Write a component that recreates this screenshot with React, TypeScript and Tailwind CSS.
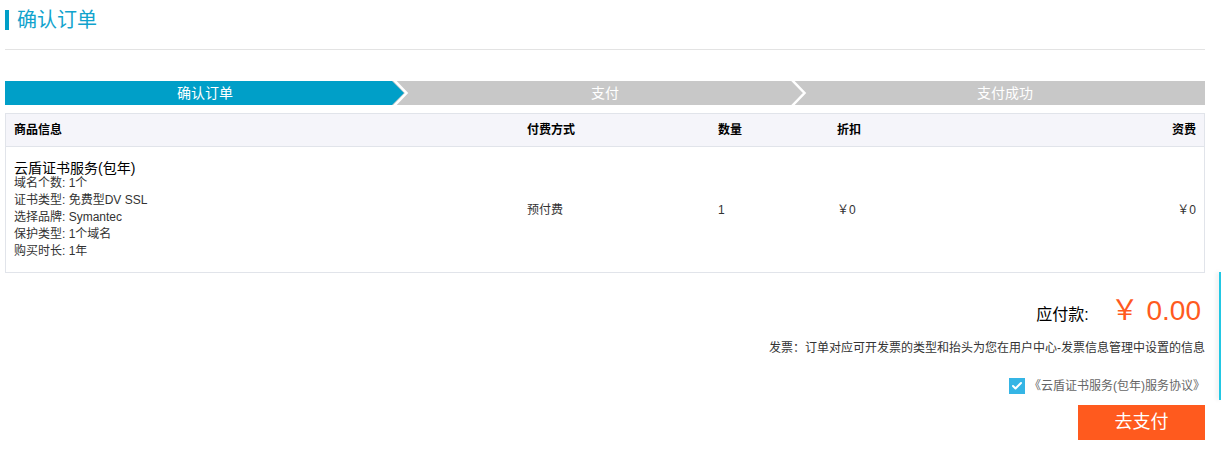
import { Check } from 'lucide-react';

const font = { fontFamily: '"Liberation Sans", "Noto Sans CJK SC", sans-serif' };

const details = [
  '域名个数: 1个',
  '证书类型: 免费型DV SSL',
  '选择品牌: Symantec',
  '保护类型: 1个域名',
  '购买时长: 1年',
];

function Steps() {
  return (
    <div className="mt-[31px] flex h-6 bg-[#c8c8c8] text-sm text-white">
      <div className="relative flex flex-1 items-center justify-center">
        <div className="absolute inset-y-0 left-0 right-[13px] bg-[#009fc8]" />
        <svg className="absolute left-[387px] top-0 z-10 h-6 w-[18px]" viewBox="0 0 18 24">
          <polygon points="0,0 12,12 0,24" fill="#009fc8" />
          <polyline points="2,-1 14.5,12 2,25" fill="none" stroke="#fff" strokeWidth="2.5" />
        </svg>
        <span className="relative">确认订单</span>
      </div>
      <div className="relative flex flex-1 items-center justify-center">
        <svg className="absolute right-[-3px] top-0 h-6 w-[18px]" viewBox="0 0 18 24">
          <polyline points="2,-1 14.5,12 2,25" fill="none" stroke="#fff" strokeWidth="2.5" />
        </svg>
        <span>支付</span>
      </div>
      <div className="flex flex-1 items-center justify-center">
        <span>支付成功</span>
      </div>
    </div>
  );
}

function OrderTable() {
  const cols = 'grid grid-cols-[513px_191px_119px_200px_1fr]';
  return (
    <div className="mt-2 border border-[#e1e4ea] text-xs text-[#333]">
      <div className={`${cols} h-[33px] items-center border-b border-[#e1e4ea] bg-[#f5f5fa] font-bold text-black`}>
        <div className="px-2">商品信息</div>
        <div className="px-2">付费方式</div>
        <div className="px-2">数量</div>
        <div className="px-2">折扣</div>
        <div className="px-2 text-right">资费</div>
      </div>
      <div className={`${cols} items-center`}>
        <div className="px-2 pb-[12px] pt-[14px]">
          <div className="text-sm leading-[14px] text-black">云盾证书服务(包年)</div>
          {details.map((d) => (
            <div key={d} className="leading-[17px]">
              {d}
            </div>
          ))}
        </div>
        <div className="px-2">预付费</div>
        <div className="px-2">1</div>
        <div className="px-2">￥0</div>
        <div className="px-2 text-right">￥0</div>
      </div>
    </div>
  );
}

export default function App() {
  return (
    <div className="relative min-h-[455px] bg-white px-[5px]" style={font}>
      <div className="w-[1200px]">
        <div className="mt-[10px] flex h-5 items-center">
          <div className="h-5 w-1 bg-[#009fc8]" />
          <h1 className="ml-2 text-[20px] leading-5 text-[#11a3cd]">确认订单</h1>
        </div>
        <div className="mt-[19px] h-px bg-[#e3e3e3]" />

        <Steps />
        <OrderTable />

        <div className="mt-[20px] flex items-baseline justify-end pr-[4px] leading-[36px]">
          <span className="text-base text-black">应付款:</span>
          <span className="ml-[22px] text-[28px] text-[#ff5a1e]">￥ 0.00</span>
        </div>

        <div className="mt-[10px] text-right text-xs leading-[18px] text-[#333]">
          发票：订单对应可开发票的类型和抬头为您在用户中心-发票信息管理中设置的信息
        </div>

        <div className="mt-[21px] flex h-4 items-center justify-end">
          <div className="flex h-4 w-4 items-center justify-center bg-[#35b5e5]">
            <Check className="h-3 w-3 text-white" strokeWidth={4} />
          </div>
          <span className="ml-1 text-xs text-[#666]">《云盾证书服务(包年)服务协议》</span>
        </div>

        <div className="mt-[11px] flex justify-end">
          <button className="h-[35px] w-[127px] bg-[#ff5a1e] text-[18px] text-white">去支付</button>
        </div>
      </div>

      <div className="absolute right-0 top-[262px] h-[128px] w-[2px] bg-[#22c7e3] shadow-[-2px_0_4px_rgba(0,0,0,0.12)]" />
    </div>
  );
}
